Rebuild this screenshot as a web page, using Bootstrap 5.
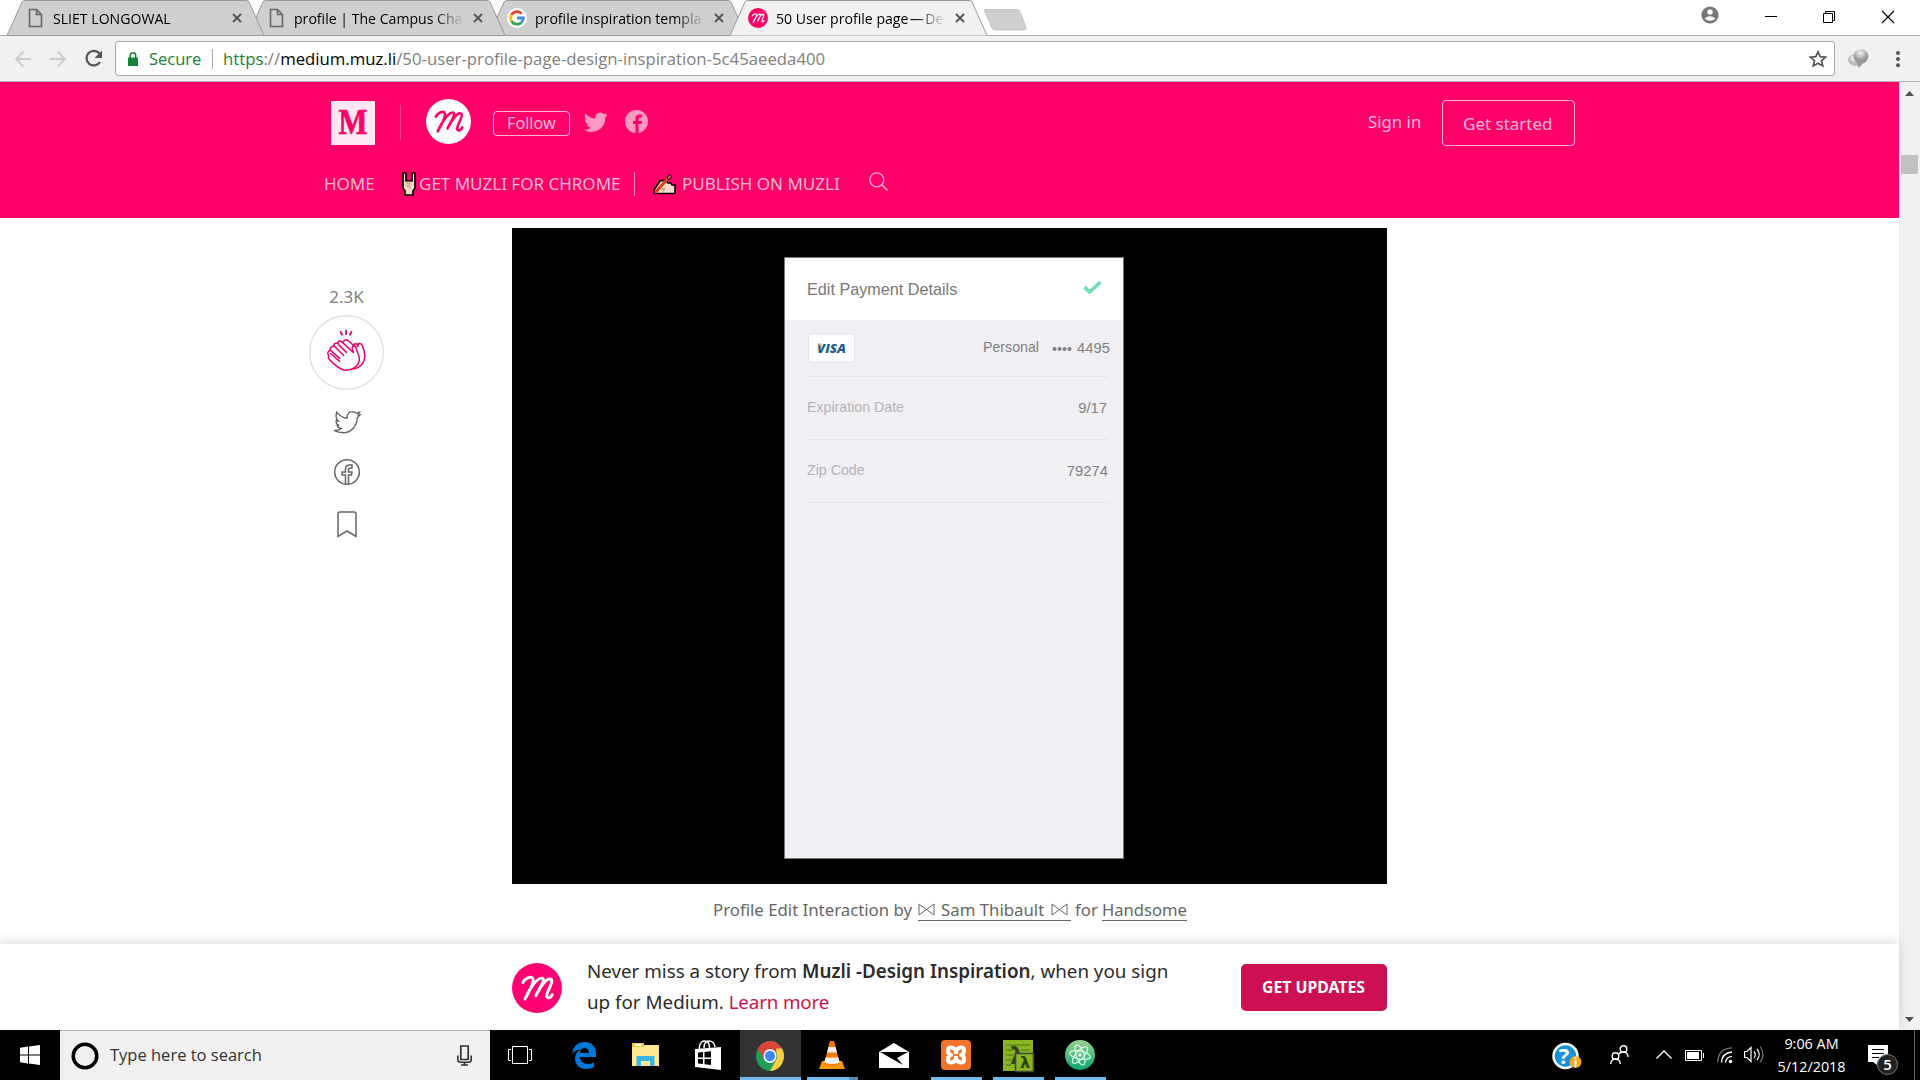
<!DOCTYPE html>
<html lang="en">
<head>
<meta charset="utf-8">
<title>50 User profile page</title>
<link href="https://cdn.jsdelivr.net/npm/bootstrap@5.3.0/dist/css/bootstrap.min.css" rel="stylesheet">
<style>
body{margin:0;width:1920px;height:1080px;font-family:"Noto Sans","Open Sans",sans-serif;background:#fff}
svg{display:block;flex:none;overflow:visible}
.ui{font-family:"Open Sans",sans-serif}
.fx{display:block;flex:none;white-space:nowrap}
.strip{height:35px;flex:none}
.tab-item{width:257px;height:36px;flex:none;margin-right:-16px;position:relative}
.tab-shape{position:absolute;left:0;top:0}
.tab-body{position:relative;height:36px;padding-left:18px}
.tab-icon{width:20px;margin-right:8px}
.tab-title{width:168px;overflow:hidden;font-size:14.1px;line-height:20px;color:#000;margin-top:2px;-webkit-mask-image:linear-gradient(90deg,#000 140px,transparent 170px);mask-image:linear-gradient(90deg,#000 140px,transparent 170px)}
.tab-close{margin-left:10px}
.toolbar{height:47px;flex:none;background:#f1f1f1;border-top:1px solid #a9a9a9;border-bottom:1px solid #b6b6b6;position:relative}
.omnibox{width:1720px;height:35px;border:1px solid #a6a6a6;border-radius:3px;background:#fff;font-size:16.5px;line-height:33px;color:#808080}
.address{font-size:16.75px;margin-left:10px}
.secure{color:#188038}
.page-main{width:1899px}
.pink{height:136px;background:#ff0068;color:rgba(255,255,255,.72)}
.scroller{width:21px;background:#f1f1f1}
.outline{border:1px solid rgba(255,255,255,.7);border-radius:4px}
.stage{width:875px;height:656px;background:#000;padding:29px 0 0 272px}
.phone{width:340px;height:602px;background:#f0eff4;border:1px solid #77757b;font-family:"Liberation Sans",sans-serif;color:#808080;font-size:14.8px}
.phone-head{height:62px;background:#fff;padding:0 21px 0 22px}
.phone-title{font-size:16.2px;color:#777}
.phone-row{margin:0 15px 0 22px;border-bottom:1px solid #e4e3e9}
.phone-label{font-size:14.2px}
.lite{color:#b4b3b8}
.caption-line{padding:15px 0 0 201px;font-size:16.8px;line-height:22px;color:#666}
.under{border-bottom:1px solid #666;line-height:21px}
.promo{height:86px;background:#fff;box-shadow:0 -2px 12px rgba(0,0,0,.14);position:relative;padding-left:512px;color:#2b2b2b;font-size:18.8px;line-height:31px}
.learn{color:#cc1053;letter-spacing:-.15px}
.update{width:146px;height:47px;border-radius:5px;background:#cc1053;color:#fff;font-weight:700;font-size:15.8px;line-height:47px;padding-left:21px}
.taskbar{height:50px;flex:none;background:#000;position:relative}
.searchbox{width:430px;height:50px;background:#f0f0f0;border-top:1px solid #b4b4b4;color:#333;font-size:16.5px}
.app{width:51px;height:50px;margin:0 5.5px;border-bottom:3px solid transparent;padding-top:3px}
.run{border-color:#76b9ed}
.app-active{width:61px;background:#333;border-bottom:3px solid #76b9ed;padding:11px 2px 0 0}
.clock{color:#fff;font-size:14.4px;line-height:23px;width:69px;margin:2px 22px 0 13px}
</style>
</head>
<body class="d-flex flex-column overflow-hidden">
<svg width="0" height="0" class="position-absolute">
<defs>
<symbol id="page" viewBox="0 0 20 20"><path d="M4.500 1.500h7l5 5v12h-12zM11.500 1.500v5h5" fill="none" stroke="#666" stroke-width="1.600"/></symbol>
<symbol id="script-m" viewBox="0 0 46 46"><path d="M10 18c2-4 7-6 9-4 2 3-3 12-7 19 4-9 11-20 16-19 3 1-3 10-6 16 4-8 10-17 14-15 3 2-5 12-4 16 1 2 4 1 5-2" fill="none" stroke="currentColor" stroke-width="2.700" stroke-linecap="round" stroke-linejoin="round"/></symbol>
<symbol id="cross" viewBox="0 0 12 12"><path d="M2 2l8 8M10 2l-8 8" stroke="#555" stroke-width="1.900"/></symbol>
<symbol id="bird" viewBox="0 0 24 24"><path d="M23.600 4.800c-.9.400-1.800.600-2.800.800 1-.6 1.800-1.500 2.100-2.700-.9.600-2 1-3.100 1.200a4.850 4.850 0 0 0-8.300 4.400C7.500 8.300 3.900 6.400 1.500 3.400a4.850 4.850 0 0 0 1.500 6.500c-.8 0-1.500-.2-2.200-.6 0 2.400 1.600 4.400 3.900 4.900-.7.200-1.400.2-2.200.1.600 1.900 2.400 3.300 4.500 3.400A9.800 9.800 0 0 1 0 19.700 13.700 13.700 0 0 0 21.200 7.500c.9-.7 1.800-1.600 2.400-2.700z"/></symbol>
</defs></svg>

<header class="strip d-flex ui" style="padding-left:7px">
  <div class="tab-item" style="z-index:3"><svg class="tab-shape" width="257" height="36"><path d="M0 35.500L15 2q1-1.500 3-1.500H239q2 0 3 1.500L257 35.500z" fill="#cfcfcf" stroke="#999"/></svg><div class="tab-body d-flex align-items-center"><svg class="tab-icon" width="20" height="20"><use href="#page"/></svg><div class="tab-title">SLIET LONGOWAL</div><svg width="12" height="12" class="tab-close"><use href="#cross"/></svg></div></div>
  <div class="tab-item" style="z-index:2"><svg class="tab-shape" width="257" height="36"><path d="M0 35.500L15 2q1-1.500 3-1.500H239q2 0 3 1.500L257 35.500z" fill="#cfcfcf" stroke="#999"/></svg><div class="tab-body d-flex align-items-center"><svg class="tab-icon" width="20" height="20"><use href="#page"/></svg><div class="tab-title fx">profile | The Campus Cha</div><svg width="12" height="12" class="tab-close"><use href="#cross"/></svg></div></div>
  <div class="tab-item" style="z-index:1"><svg class="tab-shape" width="257" height="36"><path d="M0 35.500L15 2q1-1.500 3-1.500H239q2 0 3 1.500L257 35.500z" fill="#cfcfcf" stroke="#999"/></svg><div class="tab-body d-flex align-items-center"><svg class="tab-icon" width="20" height="20" viewBox="0 0 20 20"><circle cx="10" cy="10" r="10" fill="#fff"/><g fill="none" stroke-width="2.800"><path d="M4.500 6.800A6.300 6.300 0 0 1 14.600 5.600" stroke="#ea4335"/><path d="M4.600 13.200a6.300 6.300 0 0 1-.1-6.400" stroke="#fbbc05"/><path d="M14.300 14.600a6.300 6.300 0 0 1-9.700-1.400" stroke="#34a853"/><path d="M10 10h6.300a6.300 6.300 0 0 1-2 4.600" stroke="#4285f4"/></g></svg><div class="tab-title fx">profile inspiration templa</div><svg width="12" height="12" class="tab-close"><use href="#cross"/></svg></div></div>
  <div class="tab-item" style="z-index:4"><svg class="tab-shape" width="257" height="36"><path d="M0 35.500L15 2q1-1.500 3-1.500H239q2 0 3 1.500L257 35.500" fill="#f1f1f1" stroke="#999"/></svg><div class="tab-body d-flex align-items-center"><svg class="tab-icon" width="20" height="20" viewBox="0 0 46 46" color="#fff"><circle cx="23" cy="23" r="23" fill="#ff0068"/><use href="#script-m"/></svg><div class="tab-title fx">50 User profile page&#8202;—&#8202;De</div><svg width="12" height="12" class="tab-close"><use href="#cross"/></svg></div></div>
  <svg width="43" height="22" style="margin:9px 0 0 13px"><path d="M2 .5H33q2 0 3 2l6 16q.5 2.500-2 2.500H11q-2 0-3-2L1 3Q0 .5 2 .5z" fill="#cfcfcf" stroke="#c4c4c4"/></svg>
  <svg width="18" height="18" viewBox="0 0 18 18" class="ms-auto" style="margin-top:6px"><circle cx="9" cy="9" r="8.600" fill="#777"/><circle cx="9" cy="6" r="2.700" fill="#fff"/><path d="M3.500 12.500Q9 8 14.500 12.500 9 17 3.500 12.500z" fill="#fff"/></svg>
  <svg width="12" height="12" style="margin:11px 0 0 46px"><path d="M0 5.500h12" stroke="#000"/></svg>
  <svg width="12" height="12" style="margin:11px 0 0 46px"><path d="M.5 2.500h9v9h-9zM2.500 2V.500h9v9H10" fill="none" stroke="#000"/></svg>
  <svg width="12" height="12" style="margin:11px 26px 0 47px"><path d="M0 0l12 12M12 0L0 12" stroke="#000" stroke-width="1.200"/></svg>
</header>

<div class="toolbar d-flex align-items-center ui">
  <svg width="86" height="20" viewBox="0 0 86 20" style="margin-left:15px"><g fill="none" stroke="#ccc" stroke-width="1.800"><path d="M16 10H1M8.500 2.500L1 10l7.500 7.500M35 10h15M42.500 2.500L50 10l-7.500 7.500"/><path d="M84.500 4.500A7.300 7.300 0 1 0 85 13" stroke="#555" stroke-width="2.300"/></g><path d="M87 1.500V9h-7.500z" fill="#555"/></svg>
  <div class="omnibox d-flex align-items-center" style="margin-left:14px">
    <svg width="10" height="14" viewBox="0 0 10 14" style="margin-left:12px"><path d="M0 5.500h10V14H0z" fill="#188038"/><path d="M2.300 6V3.500a2.700 2.700 0 0 1 5.400 0V6" fill="none" stroke="#188038" stroke-width="1.500"/></svg>
    <span class="fx secure" style="width:63px;margin-left:11px">Secure</span>
    <svg width="1" height="20"><path d="M.5 0v20" stroke="#aaa"/></svg>
    <span class="fx address"><span class="secure">https</span>://<span class="text-black">medium.muz.li</span>/50-user-profile-page-design-inspiration-5c45aeeda400</span>
    <svg width="18" height="18" viewBox="0 0 18 18" class="ms-auto" style="margin-right:7px"><path d="M9 1.800l2.200 4.900 5.300.5-4 3.500 1.200 5.200L9 13.200l-4.700 2.700 1.200-5.200-4-3.500 5.300-.5z" fill="none" stroke="#555" stroke-width="1.700"/></svg>
  </div>
  <svg width="21" height="20" viewBox="0 0 21 20" style="margin-left:13px"><defs><radialGradient id="ball" cx=".45" cy=".25"><stop stop-color="#f2f2f2"/><stop offset="1" stop-color="#999"/></radialGradient></defs><ellipse cx="7.500" cy="11" rx="7.500" ry="6" fill="#bdbdbd"/><ellipse cx="6" cy="9.500" rx="4" ry="3" fill="#e2e2e2"/><circle cx="13" cy="7.500" r="7.300" fill="url(#ball)"/><path d="M9 13.500l6 1-4.500 4.500z" fill="#999"/></svg>
  <svg width="4" height="18" style="margin-left:27px"><g fill="#555"><circle cx="2" cy="3" r="2"/><circle cx="2" cy="9" r="2"/><circle cx="2" cy="15.300" r="2"/></g></svg>
</div>

<div class="d-flex flex-grow-1" style="height:948px">
<main class="page-main d-flex flex-column">
  <div class="pink flex-shrink-0">
    <div class="d-flex align-items-start" style="padding:17px 0 0 331px;height:82px">
      <svg width="44" height="44" style="margin-top:2px"><rect width="44" height="44" fill="#ffe8f1"/><text x="22" y="33" text-anchor="middle" font-family="Liberation Serif" font-weight="700" font-size="35" textLength="29" lengthAdjust="spacingAndGlyphs" fill="#ff0068" stroke="#ff0068" stroke-width=".7">M</text></svg>
      <svg width="1" height="35" style="margin:6px 25px 0"><path d="M.5 0v35" stroke="#ff3d8b"/></svg>
      <svg width="45" height="45" viewBox="0 0 46 46" color="#ff0068"><circle cx="23" cy="23" r="23" fill="#fff"/><use href="#script-m"/></svg>
      <div class="outline fx" style="width:77px;height:25px;margin:11.500px 0 0 22px;padding-left:13px;font-size:16.200px;line-height:22px">Follow</div>
      <svg width="24" height="24" style="margin:11px 0 0 14px" fill="#ff99c2"><use href="#bird"/></svg>
      <svg width="23" height="23" viewBox="0 0 23 23" style="margin:11px 0 0 17px"><circle cx="11.500" cy="11.500" r="11.500" fill="#ff99c2"/><path d="M10.500 23v-9H8v-3h2.500V8q0-3.500 4.500-3.500h2v3h-2q-1.500 0-1.500 1.500v2H17l-.4 3h-3.100v9z" fill="#ff0068"/></svg>
      <span class="fx" style="margin:10px 0 0 720px;width:74px;font-size:16.800px">Sign in</span>
      <div class="outline fx" style="width:133px;height:46px;margin-top:1px;padding-left:20px;font-size:17px;line-height:46px">Get started</div>
    </div>
    <div class="d-flex align-items-center" style="padding-left:324px;height:40px;font-size:17px">
      <span class="fx" style="width:78px">HOME</span>
      <svg width="14" height="24" viewBox="0 0 14 24"><path d="M1 1h3v8h6V1h3v15l-2 3v4H3v-4l-2-3z" fill="#f7dcc6" stroke="#000" stroke-width="1.700"/><path d="M4 12h6M5 9v3M7.500 9v3M4 14h4v3" stroke="#c39a80" fill="none"/></svg>
      <span class="fx" style="margin-left:3px;width:215px">GET MUZLI FOR CHROME</span>
      <svg width="1" height="24"><path d="M.5 0v24" stroke="#ff86b6"/></svg>
      <svg width="23" height="21" viewBox="0 0 23 21" style="margin-left:18px"><path d="M1 19.500V16l6-9 5-1 3 3 3 0 1 2h3v8.500z" fill="#f7dcc6" stroke="#000" stroke-width="1.700"/><path d="M2 19L15 4" stroke="#e03a20" stroke-width="3"/><path d="M14 4l2.500-3.500 2 2L16 6z" fill="#c66" stroke="#000"/><path d="M8 14l4 1-3 2" stroke="#b58b70" fill="none"/></svg>
      <span class="fx" style="margin-left:6px;width:187px">PUBLISH ON MUZLI</span>
      <svg width="19" height="19" viewBox="0 0 19 19" style="margin-top:-5px"><circle cx="7.800" cy="7.800" r="7" fill="none" stroke="#ffb0d0" stroke-width="1.300"/><path d="M13 13l5.500 5.500" stroke="#ffb0d0" stroke-width="1.700"/></svg>
    </div>
  </div>
  <div class="d-flex" style="height:726px">
    <aside class="d-flex flex-column align-items-center" style="width:75px;margin:67px 128px 0 309px;color:#808080">
      <span class="fx" style="font-size:17px;line-height:24px">2.3K</span>
      <svg width="75" height="75" viewBox="0 0 76 76" style="margin-top:6px"><circle cx="38" cy="38" r="37.300" fill="#fff" stroke="#ddd" stroke-width="1.200"/><g fill="none" stroke="#e8006a" stroke-width="1.500" stroke-linecap="round" stroke-linejoin="round"><path d="M32 17l1.500 3M37.500 15.500v4M43 17l-1.500 3" stroke-width="1.800"/><path d="M22 39l9 8M20 42c-3 2 12 14 17 14 12-1 16-9 13-16l-3-8c-2-2-4 0-3 3l1 3-12-11c-3-2-5 1-3 3l8 8M30 29c-3-2-6 1-4 3l9 9M26 32c-3-1-6 2-4 4l9 8M22 36c-3 0-4 3-2 5M35 27c1-3 4-2 5-1l6 6M45 31c1-3 4-2 5 0M49 32c0-4 4-4 5-1l2 6c2 9-2 17-13 18"/></g></svg>
      <svg width="28" height="24" viewBox="0 0 30 25" style="margin-top:20px"><path d="M1 21.500c4 .5 6-.5 8-2-3-.5-4-2-4.500-3.500h2C4 15 3 13 3.500 11l2 .5C3 9 3 5 4 2c3 4 7 6 11 6.500C15 3 18 1 21 1.500c2 0 3 1 4 1.500l3.500-1-1.500 3 2-.2-3 3.200C26 17 19 24 11 24c-4 0-7-1-10-2.500z" fill="none" stroke="#666" stroke-width="1.500"/></svg>
      <svg width="26" height="26" viewBox="0 0 26 26" style="margin-top:25px"><g fill="none" stroke="#666" stroke-width="1.500"><circle cx="13" cy="13" r="12.300"/><path d="M11.500 25v-9H8v-3h3.500v-3q0-4 4-4H18v3h-1.500q-2 0-2 2v2H18l-.5 3h-3v9"/></g></svg>
      <svg width="20" height="27" viewBox="0 0 20 27" style="margin-top:26px"><path d="M1 25.500V3q0-2 2-2h14q2 0 2 2v22.500L10 20z" fill="none" stroke="#666" stroke-width="1.500"/></svg>
    </aside>
    <article style="padding-top:10px">
      <div class="stage"><div class="phone">
        <div class="phone-head d-flex align-items-center justify-content-between"><span class="fx phone-title">Edit Payment Details</span><svg width="19" height="15" viewBox="0 0 19 15" style="margin-top:-3px"><path d="M1.500 7l5 5L17.500 2" fill="none" stroke="#77d8c0" stroke-width="3.600"/></svg></div>
        <div class="phone-row d-flex align-items-center" style="height:57px"><svg width="48" height="29"><rect x="1.500" y="0" width="46" height="28" rx="2" fill="#fff" stroke="#e5e4e8"/><text x="10" y="19" font-family="Open Sans" font-style="italic" font-weight="800" font-size="12.500" textLength="29" lengthAdjust="spacingAndGlyphs" fill="#1f5f8b">VISA</text><path d="M10 9.500h4l1 4z" fill="#e3a06c"/></svg><span class="fx phone-label" style="margin-left:128px">Personal</span><svg width="20" height="5" style="margin-left:13px" fill="#808080"><circle cx="2.500" cy="3" r="2"/><circle cx="7.500" cy="3" r="2"/><circle cx="12.500" cy="3" r="2"/><circle cx="17.500" cy="3" r="2"/></svg><span class="fx ms-auto" style="margin-right:-2px">4495</span></div>
        <div class="phone-row d-flex align-items-center justify-content-between" style="height:63px;padding-right:1px"><span class="fx lite phone-label">Expiration Date</span><span class="fx">9/17</span></div>
        <div class="phone-row d-flex align-items-center justify-content-between" style="height:63px"><span class="fx lite phone-label">Zip Code</span><span class="fx">79274</span></div>
      </div></div>
      <div class="caption-line d-flex"><span class="fx" style="width:205px">Profile Edit Interaction by</span><span class="fx under d-flex align-items-center" style="width:153px"><svg width="17" height="13" viewBox="0 0 17 13"><path d="M1 1v11L16 1v11z" fill="none" stroke="#666"/></svg><span style="margin:0 7px 0 6px">Sam Thibault</span><svg width="17" height="13" viewBox="0 0 17 13"><path d="M1 1v11L16 1v11z" fill="none" stroke="#666"/></svg></span><span class="fx" style="margin-left:4px;width:27px">for</span><span class="fx under" style="font-size:16.600px">Handsome</span></div>
    </article>
  </div>
  <div class="promo d-flex align-items-center">
    <svg width="50" height="50" viewBox="0 0 46 46" color="#fff" style="margin-top:2px"><circle cx="23" cy="23" r="23" fill="#ff0073"/><use href="#script-m"/></svg>
    <div class="fx" style="width:654px;margin-left:25px"><div>Never miss a story from <b class="fw-semibold">Muzli -Design Inspiration</b>, when you sign</div><div>up for Medium. <span class="learn">Learn more</span></div></div>
    <div class="update fx">GET UPDATES</div>
  </div>
</main>
<div class="scroller"><svg width="21" height="948"><path d="M6 14h9l-4.500-5z" fill="#505050"/><rect x="2" y="73" width="17" height="19" fill="#c1c1c1"/><path d="M6 935h9l-4.500 5z" fill="#505050"/></svg></div>
</div>

<footer class="taskbar d-flex ui">
  <svg width="20" height="20" viewBox="0 0 20 20" style="margin:15px 20px 0"><path d="M0 2.800l8-1.200V9.500H0zM9 1.400L20 0v9.500H9zM0 10.500h8v8L0 17.300zM9 10.500h11V20L9 18.600z" fill="#fff"/></svg>
  <div class="searchbox d-flex align-items-center"><svg width="28" height="28" style="margin-left:11px"><circle cx="14" cy="14" r="11.800" fill="none" stroke="#000" stroke-width="3.500"/></svg><span class="fx" style="margin-left:11px">Type here to search</span><svg width="15" height="21" viewBox="0 0 15 21" class="ms-auto" style="margin-right:18px"><path d="M3.800 1h7.400v13.500H3.800z" fill="none" stroke="#333" stroke-width="1.700"/><path d="M.8 10.500v4q0 2.800 2.700 2.800h8q2.700 0 2.700-2.800v-4M7.500 17.500v3M4 20h7" fill="none" stroke="#333" stroke-width="1.600"/></svg></div>
  <svg width="24" height="18" style="margin:16px 40px 0 18px"><path d="M4.500.500h15v17h-15zM3 3.500H.500v11H3M21 3.500h2.500v11H21" fill="none" stroke="#fff"/></svg>
  <svg width="24" height="27" viewBox="0 0 24 27" style="margin:12px 36px 0 0"><path d="M0 12C1 4 6 0 13 0c7 0 11 5 11 11v4H8c0 4 3 7 8 7 3 0 5-1 6-2v5c-2 1-5 2-8 2C7 27 3 22 3 17c0-5 3-8 6-9.500C5 8 2 9 0 12zm8-1h9c0-3-2-5-4.500-5S8 8 8 11z" fill="#0078d7"/></svg>
  <svg width="27" height="24" viewBox="0 0 27 24" style="margin:13px 36px 0 0"><path d="M0 0h10l2 2h15v21H0z" fill="#ffe793"/><path d="M0 4h12V0H0z" fill="#f8c93a"/><path d="M3 1h6v2H3z" fill="#fff"/><path d="M4.500 23V13h18v10h-4.500v-5h-9v5z" fill="#3bb4e6"/></svg>
  <svg width="26" height="30" viewBox="0 0 26 30" style="margin:10px 19px 0 0"><path d="M0 9l26-2v23L0 27z" fill="#fff"/><path d="M4.500 9V6Q6 1 9.500 1q5 0 5 7M9 8q0-7 5-7 5 0 6 6" fill="none" stroke="#fff" stroke-width="1.500"/><path d="M3 12.500l5-.5v5.500H3zM9.500 12l6.500-.8v6.300H9.500zM3 19h5v5l-5-.5zM9.500 19H16v6l-6.500-.7z" fill="#000"/></svg>
  <div class="app-active d-flex justify-content-center"><svg width="28" height="30" viewBox="0 0 28 28" preserveAspectRatio="none"><circle cx="14" cy="14" r="14" fill="#1f9d58"/><path d="M14 14L1.900 7A14 14 0 0 1 26.100 7z" fill="#db4437"/><path d="M14 28l7-12-1-9h6.100A14 14 0 0 1 14 28z" fill="#ffcd40"/><path d="M1.900 7l6 10.500L14 7z" fill="#db4437"/><circle cx="14" cy="14" r="6.500" fill="#fff"/><circle cx="14" cy="14" r="5" fill="#4285f4"/></svg></div>
  <div class="app d-flex justify-content-center run" style="border-image:linear-gradient(90deg,#76b9ed 40px,#5c88b4 40px) 3"><svg width="26" height="28" viewBox="0 0 26 28" style="margin-top:8px"><path d="M3 20h20l3 8H0z" fill="#f90"/><path d="M11 0h4l6 23q-8 4-16 0z" fill="#f47d00"/><path d="M9.500 6h7l1.500 5.500H8zM6.500 16.500h13l1.300 5Q13 24.500 5.200 21.500z" fill="#eee"/></svg></div>
  <svg width="30" height="25" viewBox="0 0 30 25" style="margin:13px 16px 0"><path d="M0 9L15 0l15 9v16H0z" fill="#fff"/><path d="M1 9h28l-11 6 6 7z" fill="#000"/></svg>
  <div class="app run d-flex justify-content-center"><svg width="30" height="30" viewBox="0 0 30 30" style="margin-top:7px"><rect width="30" height="30" rx="4" fill="#f0752b"/><path d="M15 11c-2-4-8-5-8-1 0 3 1 5 3 5-2 0-3 2-3 5 0 4 6 3 8-1 2 4 8 5 8 1 0-3-1-5-3-5 2 0 3-2 3-5 0-4-6-3-8 1v3M15 19v-3" fill="none" stroke="#fff" stroke-width="4" stroke-linejoin="round"/></svg></div>
  <div class="app run d-flex justify-content-center"><svg width="31" height="32" viewBox="0 0 31 32" style="margin-top:7px"><path d="M0 0h30v31H0z" fill="#8ab51f"/><path d="M3 5h24M3 10h8M18 10h9M3 15h7M3 20h6M3 25h5" stroke="#5f8820" stroke-width="1.300"/><text x="7" y="24" font-family="DejaVu Sans" font-weight="700" font-size="23" fill="#2f4416">λ</text><path d="M12.500 13.500h18v18h-18z" fill="#8ab51f" stroke="#444" stroke-width="1.600"/><text x="17" y="28" font-family="DejaVu Sans" font-weight="700" font-size="16" fill="#2f4416">λ</text></svg></div>
  <div class="app run d-flex justify-content-center"><svg width="30" height="30" viewBox="0 0 30 30" style="margin-top:7px"><defs><linearGradient id="atm" x2="0" y2="1"><stop stop-color="#9ad28d"/><stop offset="1" stop-color="#0aa672"/></linearGradient></defs><circle cx="15" cy="15" r="15" fill="url(#atm)"/><g fill="none" stroke="#e8fff0" stroke-width="1.100"><ellipse cx="15" cy="15" rx="10.500" ry="4" transform="rotate(12 15 15)"/><ellipse cx="15" cy="15" rx="10.500" ry="4" transform="rotate(72 15 15)"/><ellipse cx="15" cy="15" rx="10.500" ry="4" transform="rotate(132 15 15)"/></g><circle cx="15" cy="15" r="1.700" fill="#fff"/></svg></div>
  <svg width="30" height="30" viewBox="0 0 30 30" class="ms-auto" style="margin-top:12px"><circle cx="13.500" cy="14" r="12" fill="#1295d8" stroke="#fff" stroke-width="2.500"/><text x="12" y="22" text-anchor="middle" font-family="Open Sans" font-weight="700" font-size="22" fill="#fff">?</text><circle cx="23.500" cy="20" r="6" fill="#f5a81c"/><text x="23.500" y="24.500" text-anchor="middle" font-family="Open Sans" font-weight="700" font-size="12" fill="#fff">i</text></svg>
  <svg width="19" height="20" viewBox="0 0 19 20" style="margin:15px 0 0 28px"><g fill="none" stroke="#fff" stroke-width="1.400"><circle cx="13.500" cy="4" r="3.300"/><circle cx="5.500" cy="11" r="3.300"/><path d="M.7 19q.5-5 4.800-5t4.800 5M9 9q1-2 4.500-2 4 0 4.800 5"/></g></svg>
  <svg width="16" height="9" style="margin:20px 0 0 27px"><path d="M.5 8.500L8 1l7.500 7.500" fill="none" stroke="#fff" stroke-width="1.400"/></svg>
  <svg width="19" height="11" style="margin:20px 0 0 13px"><path d="M.5.500h16v10H.500zM18.500 3v5" fill="none" stroke="#fff"/><path d="M2 2h12v7H2z" fill="#fff"/></svg>
  <svg width="16" height="17" viewBox="0 0 16 17" style="margin:17px 0 0 13px"><g fill="none" stroke="#fff" stroke-width="1.300"><path d="M.7 15.500Q1 1.500 15 .8" stroke="#777"/><path d="M4.500 15.500Q5 6 15 5M8.500 15.500Q9 10 15 9.300"/></g><circle cx="13.500" cy="14.500" r="1.700" fill="#fff"/></svg>
  <svg width="20" height="18" viewBox="0 0 20 18" style="margin:16px 0 0 11px"><g fill="none" stroke="#fff" stroke-width="1.200"><path d="M.6 5.500H3l4-4v14l-4-4H.6zM10 5.500q2.500 3 0 6.500M13 3q4.500 5.500 0 11"/><path d="M16 .5q6 8 0 16" stroke="#777"/></g></svg>
  <div class="clock d-flex flex-column align-items-center"><span class="fx">9:06 AM</span><span class="fx">5/12/2018</span></div>
  <svg width="32" height="32" viewBox="0 0 32 32" style="margin:15px 14px 0 0"><path d="M0 0h20v17H9v3l-4-3H0z" fill="#fff"/><path d="M4 4.500h12M4 8.500h12M4 12.500h7" stroke="#000" stroke-width="1.200"/><circle cx="19.500" cy="19.500" r="10" fill="#222" stroke="#777"/><text x="19.500" y="25" text-anchor="middle" font-family="Open Sans" font-weight="600" font-size="15" fill="#fff">5</text></svg>
  <svg width="1" height="50" style="margin-right:5px"><path d="M.5 0v50" stroke="#666"/></svg>
</footer>
<script src="https://cdn.jsdelivr.net/npm/bootstrap@5.3.0/dist/js/bootstrap.bundle.min.js"></script>
</body>
</html>
